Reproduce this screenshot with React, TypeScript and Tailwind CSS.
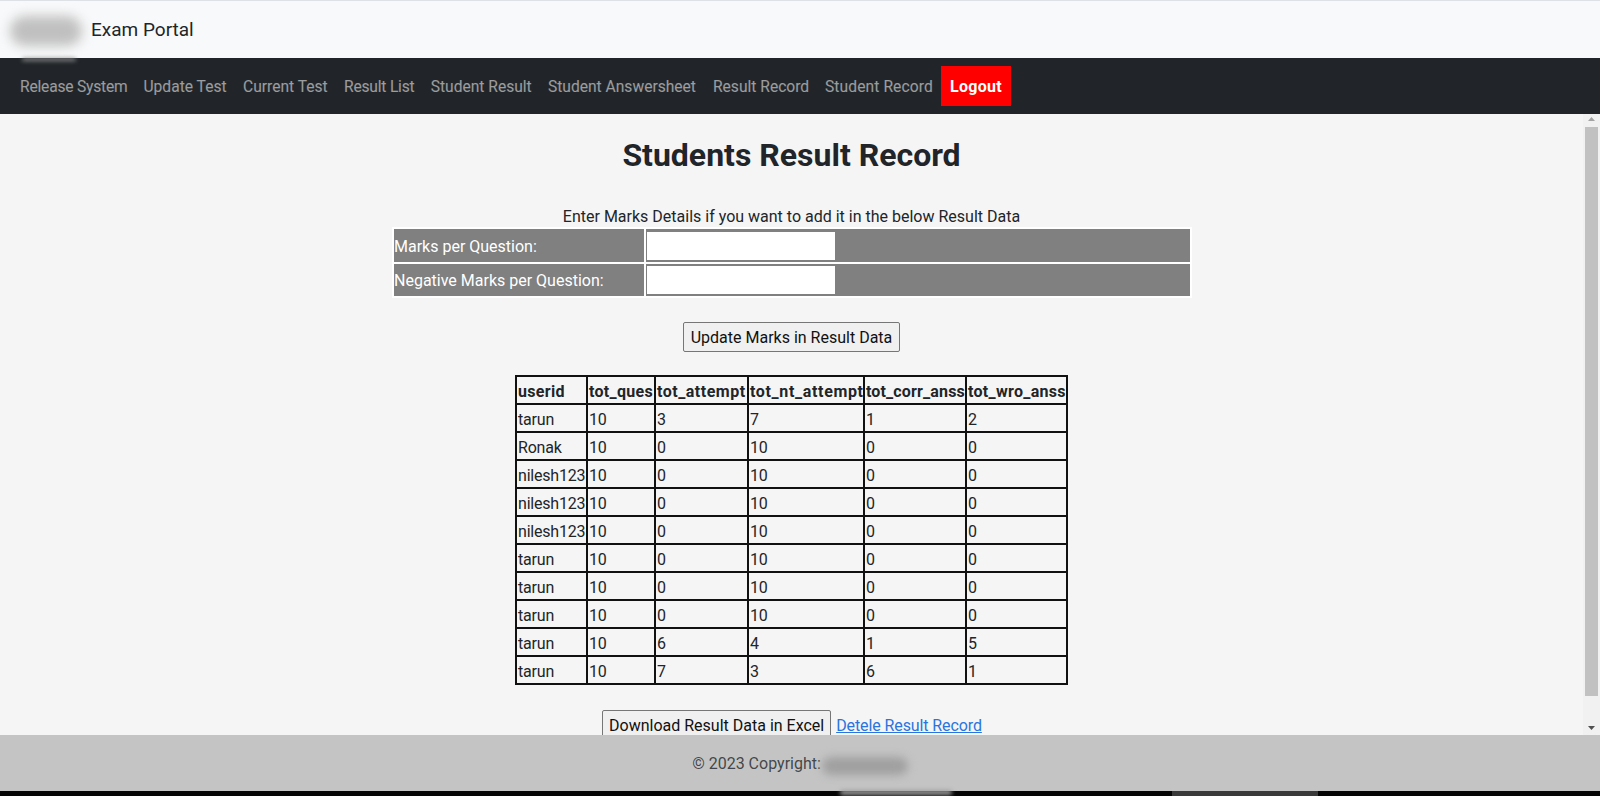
const navLinks = [
  { label: 'Release System', className: 'w-[123.5px] tracking-[-0.2px]' },
  { label: 'Update Test', className: 'w-[99.5px]' },
  { label: 'Current Test', className: 'w-[101px]' },
  { label: 'Result List', className: 'w-[86.7px] tracking-[-0.2px]' },
  { label: 'Student Result', className: 'w-[117.3px]' },
  { label: 'Student Answersheet', className: 'w-[165px]' },
  { label: 'Result Record', className: 'w-[112px]' },
  { label: 'Student Record', className: 'w-[124px] tracking-[0.1px]' },
];

const columns = [
  { label: 'userid', className: 'tracking-[0.3px]' },
  { label: 'tot_ques', className: 'tracking-[0.3px]' },
  { label: 'tot_attempt', className: 'tracking-[0.5px]' },
  { label: 'tot_nt_attempt', className: 'tracking-[0.65px]' },
  { label: 'tot_corr_anss', className: 'tracking-[0.15px]' },
  { label: 'tot_wro_anss', className: 'tracking-[0.3px]' },
];

const rows = [
  ['tarun', '10', '3', '7', '1', '2'],
  ['Ronak', '10', '0', '10', '0', '0'],
  ['nilesh123', '10', '0', '10', '0', '0'],
  ['nilesh123', '10', '0', '10', '0', '0'],
  ['nilesh123', '10', '0', '10', '0', '0'],
  ['tarun', '10', '0', '10', '0', '0'],
  ['tarun', '10', '0', '10', '0', '0'],
  ['tarun', '10', '0', '10', '0', '0'],
  ['tarun', '10', '6', '4', '1', '5'],
  ['tarun', '10', '7', '3', '6', '1'],
];

const Scrollbar = () => (
  <div className="absolute right-0 top-[-4px] bottom-0 w-[17px] bg-[#f1f1f1] flex flex-col items-center">
    <svg width="7" height="4" viewBox="0 0 7 4" className="mt-[7px] fill-[#a3a3a3]">
      <path d="M3.5 0L7 4H0z" />
    </svg>
    <div className="mt-[6px] w-[13px] h-[569px] bg-[#c1c1c1]" />
    <svg width="7" height="4" viewBox="0 0 7 4" className="mt-auto mb-[5px] fill-[#505050]">
      <path d="M0 0h7L3.5 4z" />
    </svg>
  </div>
);

export default function App() {
  return (
    <div className="relative h-[796px] overflow-hidden flex flex-col font-['Roboto',sans-serif] text-base text-[#212529] bg-[#f5f5f5]">
      <header className="h-[58px] shrink-0 bg-[#f8f9fa] border-t border-t-[#dee2e6] flex items-center pl-[91px] pt-[1px]">
        <span className="text-[19px]">Exam Portal</span>
      </header>

      <nav className="h-[56px] shrink-0 bg-[#212529] flex items-center pl-3">
        {navLinks.map((link) => (
          <a key={link.label} className={`pl-2 pt-[3px] text-[15.6px] text-white/55 whitespace-nowrap ${link.className}`}>{link.label}</a>
        ))}
        <a className="h-10 w-[70px] pt-[2px] flex items-center justify-center bg-[#ff0000] text-white font-bold tracking-[0.3px]">Logout</a>
      </nav>

      <main className="relative flex-1 min-h-0 overflow-hidden">
        <div className="pr-[17px] flex flex-col items-center">
          <h1 className="mt-[17px] h-[48px] leading-[48px] text-[32px] font-bold">Students Result Record</h1>
          <p className="mt-[27px] mb-[-1px] h-[22px] leading-[22px] text-center">Enter Marks Details if you want to add it in the below Result Data</p>

          <table className="w-[800px] mr-[-1px] border-separate border-spacing-[2px] bg-white text-white">
            <tbody>
              <tr className="h-[33px] bg-[#808080]">
                <td className="w-[250px] p-0 pt-[2px]">Marks per Question:</td>
                <td className="p-0 pl-[1px] align-middle">
                  <input className="block w-[188px] h-[28px] bg-white" />
                </td>
              </tr>
              <tr className="h-[32px] bg-[#808080]">
                <td className="p-0 pt-[2px]">Negative Marks per Question:</td>
                <td className="p-0 pl-[1px] align-middle">
                  <input className="block w-[188px] h-[28px] bg-white" />
                </td>
              </tr>
            </tbody>
          </table>

          <button className="mt-[24px] h-[30px] w-[217px] pt-[1px] bg-[#f0f0f0] border border-[#767676] rounded-[2px] text-[#111]">
            Update Marks in Result Data
          </button>

          <table className="mt-[23px] w-[552px] table-fixed border-collapse border-2 border-[#111]">
            <colgroup>
              <col className="w-[71px]" />
              <col className="w-[68px]" />
              <col className="w-[93px]" />
              <col className="w-[116px]" />
              <col className="w-[102px]" />
              <col className="w-[101px]" />
            </colgroup>
            <thead>
              <tr className="h-[28px]">
                {columns.map((col) => (
                  <th key={col.label} className={`border-2 border-[#111] px-[1px] pt-[3px] pb-0 leading-[22px] text-left font-bold whitespace-nowrap ${col.className}`}>{col.label}</th>
                ))}
              </tr>
            </thead>
            <tbody>
              {rows.map((row, i) => (
                <tr key={i} className="h-[28px]">
                  {row.map((cell, j) => (
                    <td key={j} className="border-2 border-[#111] px-[1px] pt-[4px] pb-0 leading-[22px] tracking-[-0.2px]">{cell}</td>
                  ))}
                </tr>
              ))}
            </tbody>
          </table>

          <div className="mt-[25px] ml-[1px] flex items-center gap-[5px]">
            <button className="h-[30px] w-[229px] pt-[1px] bg-[#f0f0f0] border border-[#767676] rounded-[2px] text-[#111]">
              Download Result Data in Excel
            </button>
            <a className="pt-[1px] text-[#2a74e0] underline tracking-[-0.1px]">Detele Result Record</a>
          </div>
        </div>
        <Scrollbar />
      </main>

      <footer className="h-[56px] shrink-0 bg-[#c4c4c4] flex items-center justify-center pt-[2px] pr-[87px] text-[#212529]/80">
        © 2023 Copyright:
      </footer>
      <div className="h-[5px] shrink-0 bg-[#050505] flex">
        <div className="ml-[1172px] w-[146px] bg-[#3a3a3a]" />
      </div>

      {/* blurred out logo and name */}
      <div className="absolute left-[10px] top-[16px] w-[72px] h-[30px] rounded-full bg-[#c0c0c0] blur-[6px]" />
      <div className="absolute left-[22px] top-[58px] w-[54px] h-[3px] rounded-full bg-[#8a8a8a] blur-[2px]" />
      <div className="absolute left-[822px] top-[757px] w-[86px] h-[18px] rounded-full bg-[#a0a0a0] blur-[4px]" />
      <div className="absolute left-[840px] top-[790px] w-[112px] h-[5px] rounded-full bg-[#a0a0a0] blur-[2px]" />
    </div>
  );
}
